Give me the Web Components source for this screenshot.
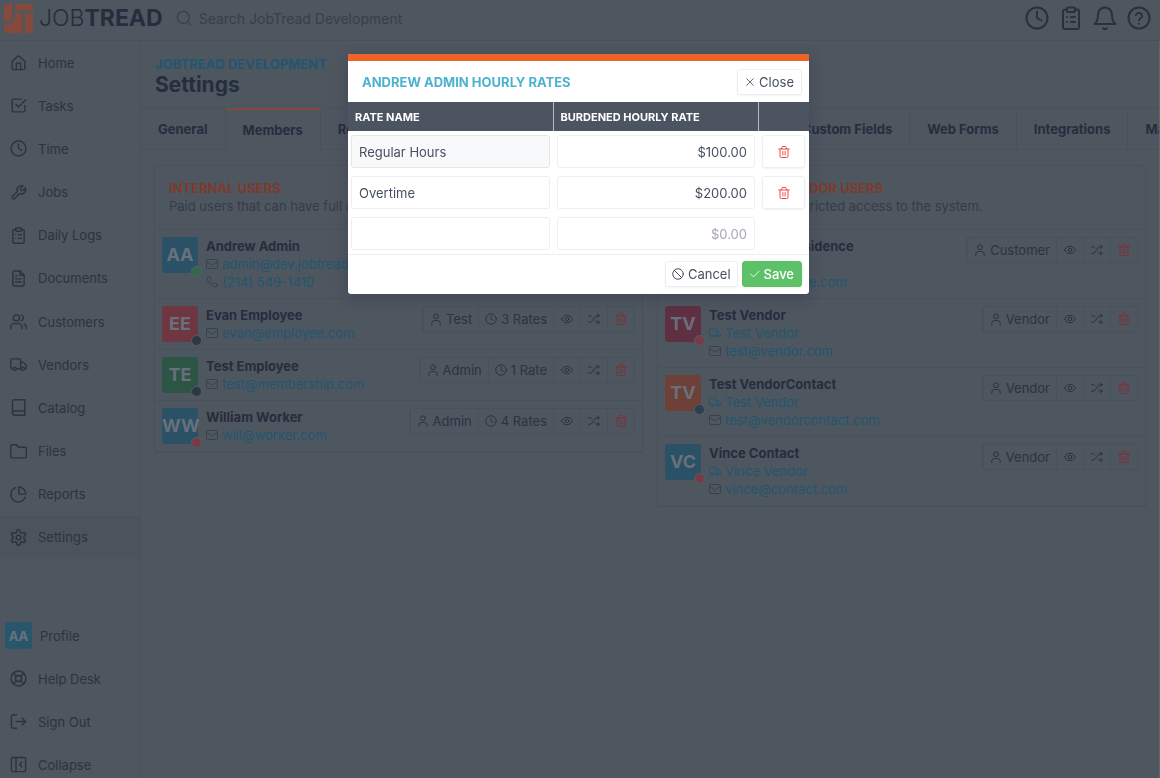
<!DOCTYPE html>
<html lang="en">
<head>
<meta charset="utf-8">
<title>JobTread Settings</title>
<style>
:root{
  --bg:#4e5660; --line:#49515c; --ink:#2c3341; --strong:#262d3d; --muted:#353c49;
  --link:#22566f; --danger:#7f3138;
}
body{margin:0;background:var(--bg);font:13px/18px Inter,"Liberation Sans",sans-serif;color:var(--ink);height:100vh;overflow:hidden}
</style>
</head>
<body>
<jt-app></jt-app>
<script>
const ICONS={
 home:'<path d="M3 10.5 10.5 3.400a2.200 2.200 0 0 1 3 0L21 10.500V20a2 2 0 0 1-2 2H5a2 2 0 0 1-2-2z"/><path d="M9 22V13h6v9"/>',
 tasks:'<path d="m8.500 10.500 3.500 3.500L22 4"/><path d="M21 12v7a2 2 0 0 1-2 2H5a2 2 0 0 1-2-2V5a2 2 0 0 1 2-2h11"/>',
 clock:'<circle cx="12" cy="12" r="10.500"/><path d="M12 5.500V12l4.500 2.500"/>',
 wrench:'<path d="M14.700 6.300a1 1 0 0 0 0 1.400l1.600 1.600a1 1 0 0 0 1.400 0l3.770-3.770a6 6 0 0 1-7.940 7.940l-6.910 6.910a2.120 2.120 0 0 1-3-3l6.910-6.910a6 6 0 0 1 7.940-7.940z"/>',
 clipboard:'<rect x="8" y="1.500" width="8" height="4.500" rx="1"/><path d="M16 3.500h2a2 2 0 0 1 2 2V21a2 2 0 0 1-2 2H6a2 2 0 0 1-2-2V5.500a2 2 0 0 1 2-2h2M12 11h4M12 16h4M8 11h.01M8 16h.01"/>',
 file:'<path d="M14 1.500H6a2 2 0 0 0-2 2v17a2 2 0 0 0 2 2h12a2 2 0 0 0 2-2v-13z"/><path d="M14 1.500v6h6M16 12.500H8M16 17H8M10 8H8"/>',
 users:'<circle cx="9" cy="7" r="4.300"/><path d="M1 22v-2a5 5 0 0 1 5-5h6a5 5 0 0 1 5 5v2M23 22v-2a5 5 0 0 0-3-4.600M16 3a4.300 4.300 0 0 1 0 8.200"/>',
 truck:'<path d="M4 18H3a2 2 0 0 1-2-2V6a2 2 0 0 1 2-2h10a2 2 0 0 1 2 2v12H9M15 9h4l4 4.500V17a1 1 0 0 1-1 1h-1"/><circle cx="6.500" cy="18" r="2.300"/><circle cx="18" cy="18" r="2.300"/>',
 book:'<path d="M3.500 19.500A2.500 2.500 0 0 1 6 17h15"/><path d="M6 1h15v22H6a2.500 2.500 0 0 1-2.500-2.500v-17A2.500 2.500 0 0 1 6 1z"/>',
 folder:'<path d="M23 19a2 2 0 0 1-2 2H3a2 2 0 0 1-2-2V4.500a2 2 0 0 1 2-2h6l3 3.500h9a2 2 0 0 1 2 2z"/>',
 pie:'<path d="M21.500 16A10.500 10.500 0 1 1 8 2.300"/><path d="M22.500 11.500A10 10 0 0 0 12.500 1.500v10z"/>',
 gear:'<path d="M12.220 2h-.44a2 2 0 0 0-2 2v.18a2 2 0 0 1-1 1.730l-.43.25a2 2 0 0 1-2 0l-.15-.08a2 2 0 0 0-2.730.73l-.22.38a2 2 0 0 0 .73 2.730l.15.1a2 2 0 0 1 1 1.720v.51a2 2 0 0 1-1 1.740l-.15.09a2 2 0 0 0-.73 2.730l.22.38a2 2 0 0 0 2.730.73l.15-.08a2 2 0 0 1 2 0l.43.25a2 2 0 0 1 1 1.730V20a2 2 0 0 0 2 2h.44a2 2 0 0 0 2-2v-.18a2 2 0 0 1 1-1.730l.43-.25a2 2 0 0 1 2 0l.15.08a2 2 0 0 0 2.730-.73l.22-.39a2 2 0 0 0-.73-2.730l-.15-.08a2 2 0 0 1-1-1.740v-.5a2 2 0 0 1 1-1.740l.15-.09a2 2 0 0 0 .73-2.730l-.22-.38a2 2 0 0 0-2.730-.73l-.15.08a2 2 0 0 1-2 0l-.43-.25a2 2 0 0 1-1-1.730V4a2 2 0 0 0-2-2z" transform="translate(-1.200 -1.200) scale(1.100)"/><circle cx="12" cy="12" r="3.300"/>',
 life:'<circle cx="12" cy="12" r="10.500"/><circle cx="12" cy="12" r="4.300"/><path d="m4.700 4.700 4.200 4.200M15.100 8.900l4.200-4.200M15.100 15.100l4.200 4.200M8.900 15.100l-4.200 4.200"/>',
 signout:'<path d="M9 21.500H5a3 3 0 0 1-3-3v-13a3 3 0 0 1 3-3h4M17 17l5-5-5-5M22 12H9"/>',
 collapse:'<rect x="2" y="2" width="20" height="20" rx="2"/><path d="M8.500 2v20M16.500 9l-3 3 3 3"/>',
 search:'<circle cx="11" cy="11" r="9"/><path d="m22 22-4.500-4.500"/>',
 bell:'<path d="M12 1.500a7 7 0 0 0-7 7c0 6-1.500 8-3.500 9.500h21c-2-1.500-3.500-3.500-3.500-9.500a7 7 0 0 0-7-7zM10 22.300a3 3 0 0 0 4 0"/>',
 help:'<circle cx="12" cy="12" r="10.500"/><path d="M8.900 9a3.200 3.200 0 0 1 6.200 1c0 2-3.100 2.500-3.100 4.200M12 17.800h.01"/>',
 mail:'<rect x="1" y="3" width="22" height="18" rx="2"/><path d="m1.500 7 9.500 6.500a2 2 0 0 0 2 0L22.500 7"/>',
 phone:'<path d="M22 16.900v3a2 2 0 0 1-2.180 2 19.800 19.800 0 0 1-8.630-3.070 19.500 19.500 0 0 1-6-6A19.800 19.800 0 0 1 2.120 4.110 2 2 0 0 1 4.110 2h3a2 2 0 0 1 2 1.720c.13.960.36 1.900.7 2.810a2 2 0 0 1-.45 2.110L8.090 9.910a16 16 0 0 0 6 6l1.270-1.270a2 2 0 0 1 2.110-.45c.9.340 1.850.570 2.810.700A2 2 0 0 1 22 16.900z"/>',
 user:'<circle cx="12" cy="6.500" r="4.800"/><path d="M3.500 23v-2.500a5.500 5.500 0 0 1 5.500-5.500h6a5.500 5.500 0 0 1 5.500 5.500V23"/>',
 eye:'<path d="M1 12s3.500-7.500 11-7.500S23 12 23 12s-3.500 7.500-11 7.500S1 12 1 12z"/><circle cx="12" cy="12" r="3.500"/>',
 shuffle:'<path d="M1 18.500h3c2 0 3-1 4-2.500l6-8c1-1.500 2-2.500 4-2.500h4.500M1 5.500h3c2 0 3 1 4 2.500M14 16c1 1.500 2 2.500 4 2.500h4.500M19 2l3.500 3.500L19 9M19 15l3.500 3.500L19 22"/>',
 trash:'<path d="M1.500 6h21M20 6v14.500a2.500 2.500 0 0 1-2.500 2.500h-11A2.500 2.500 0 0 1 4 20.500V6M7.500 6V3a2 2 0 0 1 2-2h5a2 2 0 0 1 2 2v3M9.700 11v7M14.300 11v7"/>',
 close:'<path d="M20 4 4 20M4 4l16 16"/>',
 ban:'<circle cx="12" cy="12" r="10.500"/><path d="m4.600 4.600 14.800 14.800"/>',
 check:'<path d="M22 5 8.500 19 2 12.500"/>'
};
const define=(tag,html)=>customElements.define(tag,class extends HTMLElement{
  constructor(){super();this.attachShadow({mode:'open'})}
  connectedCallback(){
    const t=document.createElement('template');
    t.innerHTML='<style>*{box-sizing:border-box}a{color:inherit;text-decoration:none}button,input{font:inherit;color:inherit}</style>'+(typeof html==='function'?html(this):html);
    this.shadowRoot.replaceChildren(t.content.cloneNode(true));
  }
});
const at=(el,n)=>el.getAttribute(n)||'';

define('jt-icon',el=>`<style>:host{display:inline-flex;flex:none;width:12px;height:12px}svg{width:100%;height:100%;display:block;overflow:visible}</style>
<svg viewBox="0 0 24 24" fill="none" stroke="currentColor" stroke-width="${at(el,'weight')||2}" stroke-linecap="round" stroke-linejoin="round" aria-hidden="true">${ICONS[at(el,'name')]}</svg>`);

define('jt-topbar',`<style>
:host{display:flex;align-items:center;height:41px;border-bottom:1px solid var(--line);padding:0 9px 4px 4px}
.logo{display:flex;align-items:center;gap:6px;color:var(--strong);font-size:23px;line-height:29px;font-weight:300}
.logo svg{width:29px;height:29px;display:block}
b{font-weight:700}
label{display:flex;align-items:center;gap:7px;margin-left:13px;flex:1;color:#373f4b}
input{flex:1;border:0;background:none;outline:0;padding:0;font-size:14px;line-height:20px;height:24px}
input::placeholder{color:#373f4b;opacity:1}
label jt-icon{width:16px;height:16px}
nav{display:flex;gap:10px;color:#29313f}
button{border:0;background:none;padding:0;display:flex}
nav jt-icon{width:24px;height:24px}
</style>
<a class="logo" href="#"><svg viewBox="0 0 29 29" aria-hidden="true"><rect width="29" height="29" rx="3" fill="#854a3b"/><g fill="none" stroke="#4e5660" stroke-width="2.600"><path d="M9.500 0v12.500q0 6.500-6.500 6.500H0"/><path d="M9.500 8H29M19.500 8v21"/></g></svg><span>JOB<b>TREAD</b></span></a>
<label><jt-icon name="search" weight="1.800"></jt-icon><input type="search" aria-label="Search" placeholder="Search JobTread Development"></label>
<nav><button aria-label="Time clock"><jt-icon name="clock"></jt-icon></button><button aria-label="Daily logs"><jt-icon name="clipboard"></jt-icon></button><button aria-label="Notifications"><jt-icon name="bell"></jt-icon></button><button aria-label="Help"><jt-icon name="help"></jt-icon></button></nav>`);

define('jt-nav-item',el=>`<style>
:host{display:grid}
:host([active]){background:#4b535d;box-shadow:inset 0 1px var(--line)}
a{display:flex;align-items:center;gap:11px;padding:0 10px;min-height:43px}
jt-icon{width:17px;height:17px}
:host([avatar]) a{padding-left:5px;gap:8px}
.av{width:27px;height:27px;border-radius:3px;background:#2a566c;color:#68737d;font-weight:700;display:grid;place-items:center}
</style><a href="#">${at(el,'avatar')?`<span class="av">${at(el,'avatar')}</span>`:`<jt-icon name="${at(el,'icon')}"></jt-icon>`}<slot></slot></a>`);

define('jt-sidebar',`<style>
:host{display:block;border-right:1px solid var(--line)}
nav{display:grid;grid-auto-rows:1fr;height:518px;margin-bottom:55px}
</style>
<nav aria-label="Main"><jt-nav-item icon="home">Home</jt-nav-item><jt-nav-item icon="tasks">Tasks</jt-nav-item><jt-nav-item icon="clock">Time</jt-nav-item><jt-nav-item icon="wrench">Jobs</jt-nav-item><jt-nav-item icon="clipboard">Daily Logs</jt-nav-item><jt-nav-item icon="file">Documents</jt-nav-item><jt-nav-item icon="users">Customers</jt-nav-item><jt-nav-item icon="truck">Vendors</jt-nav-item><jt-nav-item icon="book">Catalog</jt-nav-item><jt-nav-item icon="folder">Files</jt-nav-item><jt-nav-item icon="pie">Reports</jt-nav-item><jt-nav-item icon="gear" active>Settings</jt-nav-item></nav>
<jt-nav-item avatar="AA">Profile</jt-nav-item><jt-nav-item icon="life">Help Desk</jt-nav-item><jt-nav-item icon="signout">Sign Out</jt-nav-item><jt-nav-item icon="collapse">Collapse</jt-nav-item>`);

define('jt-tab',`<style>
:host{display:block;flex:none;border:solid var(--line);border-width:1px 1px 1px 0}
:host([wide]){width:464px}
:host([active]){border-top:2px solid #84493b;border-bottom-color:transparent}
a{display:block;padding:0 17px;line-height:40px;font-weight:700;color:var(--strong);white-space:nowrap}
</style><a href="#"><slot></slot></a>`);

define('jt-tabs',`<style>:host{display:flex;overflow:hidden;height:42px}</style><slot></slot>`);

define('jt-actions',el=>`<style>
:host{display:flex;flex:none;height:26px;border:1px solid var(--line);border-radius:3px}
button{display:flex;align-items:center;gap:4px;border:0;border-left:1px solid var(--line);background:none;padding:0 6px;white-space:nowrap}
button:first-child{border-left:0}
.t{color:var(--danger)}
.i{width:27px;padding:0;justify-content:center}
</style><button><jt-icon name="user"></jt-icon>${at(el,'role')}</button>${at(el,'rates')?`<button><jt-icon name="clock"></jt-icon>${at(el,'rates')}</button>`:''}<button class="i" aria-label="View"><jt-icon name="eye"></jt-icon></button><button class="i" aria-label="Change role"><jt-icon name="shuffle"></jt-icon></button><button class="i t" aria-label="Delete"><jt-icon name="trash"></jt-icon></button>`);

define('jt-user',el=>{
 const line=(n,icon,cls='')=>at(el,n)?`<a class="${cls}" href="#"><jt-icon name="${icon}"></jt-icon>${at(el,n)}</a>`:'';
 return `<style>
:host{display:flex;align-items:flex-start;gap:8px;padding:7px;border-top:1px solid var(--line)}
.av{position:relative;width:36px;height:36px;border-radius:3px;background:${at(el,'tone')};color:#68707b;display:grid;place-items:center;font-size:18px;font-weight:700}
.av i{position:absolute;right:-4px;bottom:-4px;width:11px;height:11px;border-radius:50%;border:1px solid #555d68;background:${at(el,'dot')}}
.info{flex:1;min-width:0}
strong{display:block;color:var(--strong);font-weight:700}
a{display:flex;align-items:center;gap:4px;color:var(--link);white-space:nowrap}
a jt-icon{color:#39414e}
.co jt-icon{color:var(--link)}
</style><span class="av">${at(el,'initials')}<i></i></span><div class="info"><strong>${at(el,'name')}</strong>${line('company','truck','co')}${line('email','mail')}${line('phone','phone')}</div><jt-actions role="${at(el,'level')}" rates="${at(el,'rates')}"></jt-actions>`});

define('jt-panel',el=>`<style>
:host{display:block;border:1px solid var(--line);border-radius:3px;box-shadow:0 1px 1px var(--line)}
header{padding:13px 14px 14px}
h2{margin:0;font-size:13px;line-height:18px;font-weight:700;color:#7e3a2b}
p{margin:0;color:var(--muted);white-space:nowrap}
</style><header><h2>${at(el,'heading')}</h2><p>${at(el,'note')}</p></header><slot></slot>`);

define('jt-settings',`<style>
:host{display:block;min-width:0;border-right:1px solid #5c646e}
header{padding:14px 14px 11px}
p{margin:0;font-weight:700;color:var(--link);line-height:18px}
h1{margin:0;font-size:21px;line-height:24px;font-weight:700;color:var(--strong)}
.cols{display:grid;grid-template-columns:1fr 1fr;gap:14px;align-items:start;padding:15px 13px}
</style>
<header><p>JOBTREAD DEVELOPMENT</p><h1>Settings</h1></header>
<jt-tabs><jt-tab>General</jt-tab><jt-tab active>Members</jt-tab><jt-tab wide>Roles</jt-tab><jt-tab>Custom Fields</jt-tab><jt-tab>Web Forms</jt-tab><jt-tab>Integrations</jt-tab><jt-tab>Marketing</jt-tab></jt-tabs>
<div class="cols">
<jt-panel heading="INTERNAL USERS" note="Paid users that can have full access to the system.">
<jt-user initials="AA" tone="#2a5166" dot="#2f6a4c" name="Andrew Admin" email="admin@dev.jobtread.com" phone="(214) 549-1410" level="Admin" rates="2 Rates"></jt-user>
<jt-user initials="EE" tone="#6d3640" dot="#2e3643" name="Evan Employee" email="evan@employee.com" level="Test" rates="3 Rates"></jt-user>
<jt-user initials="TE" tone="#2c5546" dot="#2e3643" name="Test Employee" email="test@membership.com" level="Admin" rates="1 Rate"></jt-user>
<jt-user initials="WW" tone="#2a5166" dot="#763c46" name="William Worker" email="will@worker.com" level="Admin" rates="4 Rates"></jt-user>
</jt-panel>
<jt-panel heading="CUSTOMER AND VENDOR USERS" note="Unpaid users with restricted access to the system.">
<jt-user initials="CR" tone="#2a5166" dot="#2f6a4c" name="Customer A Residence" email="customer@live.com" company="Res" level="Customer"></jt-user>
<jt-user initials="TV" tone="#5f3041" dot="#763c46" name="Test Vendor" company="Test Vendor" email="test@vendor.com" level="Vendor"></jt-user>
<jt-user initials="TV" tone="#6d4038" dot="#2e3f50" name="Test VendorContact" company="Test Vendor" email="test@vendorcontact.com" level="Vendor"></jt-user>
<jt-user initials="VC" tone="#2a5166" dot="#763c46" name="Vince Contact" company="Vince Vendor" email="vince@contact.com" level="Vendor"></jt-user>
</jt-panel></div>`);

define('jt-button',el=>`<style>
:host{display:inline-flex}
button{display:flex;align-items:center;justify-content:center;gap:4px;width:100%;height:26px;padding:0 6px;border:1px solid #eceef1;border-radius:3px;background:#fff;box-shadow:0 1px 2px #0000000d;color:#475060}
:host([icon=close]) button,:host([kind=save]) button{padding:0 7px}
:host([icon=close]) jt-icon,:host([kind=save]) jt-icon{width:10px;height:10px}
:host([kind=save]) button{background:#5dc167;border-color:#5dc167;color:#fff;font-weight:500}
:host([kind=trash]){display:flex}
:host([kind=trash]) button{height:33px;color:#e8504c}
</style><button aria-label="${at(el,'label')}"><jt-icon name="${at(el,'icon')}"></jt-icon><slot></slot></button>`);

define('jt-rates-dialog',`<style>
:host{position:fixed;inset:0 3px 0 0;display:flex;justify-content:center;align-items:flex-start;padding-top:54px}
dialog{position:static;margin:0;padding:0;border:0;border-top:7px solid #ee6428;width:461px;background:#fff;color:#475060;border-radius:0 0 3px 3px;box-shadow:0 4px 14px #2a314059;overflow:hidden}
header{display:flex;align-items:center;justify-content:space-between;height:41px;padding:0 7px 0 14px}
h2{margin:0;font-size:13px;line-height:18px;font-weight:700;color:#4fb1d0}
table{border-collapse:collapse;width:100%;table-layout:fixed}
th{height:29px;padding:0 7px;background:#4c5462;color:#fff;font-size:11px;line-height:14px;text-align:left;border-right:1px solid #b5bac2}
th:last-child{border:0}
col:last-child{width:51px}
td{padding:4px 3px;height:41px}
input{display:block;width:100%;height:33px;padding:0 7px;border:1px solid #eceef1;border-radius:3px;background:#fff;outline:0}
td:nth-child(2) input{text-align:right}
td:nth-child(2){padding-left:4px}
td:nth-child(3){padding:4px}
.on{background:#f8f9fb;border-color:#e3e6ea}
input::placeholder{color:#a3a9b4;opacity:1}
footer{display:flex;justify-content:flex-end;gap:4px;padding:6px 7px 7px;border-top:1px solid #eceef1}
</style>
<dialog open aria-labelledby="t"><header><h2 id="t">ANDREW ADMIN HOURLY RATES</h2><jt-button icon="close" label="Close">Close</jt-button></header>
<table><colgroup><col><col><col></colgroup><thead><tr><th>RATE NAME</th><th>BURDENED HOURLY RATE</th><th></th></tr></thead><tbody>
<tr><td><input class="on" aria-label="Rate name" value="Regular Hours"></td><td><input aria-label="Hourly rate" value="$100.00"></td><td><jt-button kind="trash" icon="trash" label="Delete rate"></jt-button></td></tr>
<tr><td><input aria-label="Rate name" value="Overtime"></td><td><input aria-label="Hourly rate" value="$200.00"></td><td><jt-button kind="trash" icon="trash" label="Delete rate"></jt-button></td></tr>
<tr><td><input aria-label="Rate name"></td><td><input aria-label="Hourly rate" placeholder="$0.00"></td><td></td></tr></tbody></table>
<footer><jt-button icon="ban" label="Cancel">Cancel</jt-button><jt-button kind="save" icon="check" label="Save">Save</jt-button></footer></dialog>`);

define('jt-app',`<style>
:host{display:grid;grid-template:auto 1fr / 141px 1fr;height:100vh}
jt-topbar{grid-column:1 / -1}
</style><jt-topbar></jt-topbar><jt-sidebar></jt-sidebar><jt-settings></jt-settings><jt-rates-dialog></jt-rates-dialog>`);
</script>
</body>
</html>
